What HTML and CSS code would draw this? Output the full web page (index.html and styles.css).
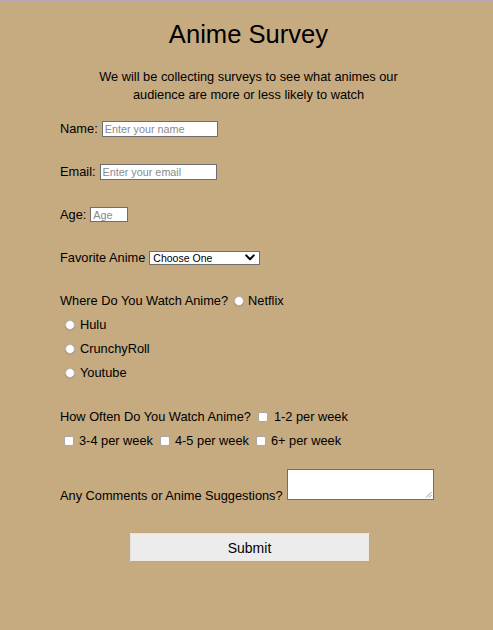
FILE: index.html
```html
<!DOCTYPE html>
<html lang="en">
<head>
<meta charset="utf-8">
<title>Anime Survey</title>
<link rel="stylesheet" href="styles.css">
</head>
<body>
<main class="page">
  <h1 class="title">Anime Survey</h1>
  <p class="intro">We will be collecting surveys to see what animes our<br>audience are more or less likely to watch</p>
  <form class="survey">
    <div class="row field"><label for="name">Name:</label><input class="text name" id="name" type="text" placeholder="Enter your name"></div>
    <div class="row field"><label for="email">Email:</label><input class="text email" id="email" type="text" placeholder="Enter your email"></div>
    <div class="row field"><label for="age">Age:</label><input class="text age" id="age" type="text" placeholder="Age"></div>
    <div class="row field"><label for="fav">Favorite Anime</label>
      <span class="select"><span>Choose One</span>
        <svg width="10" height="7" viewBox="0 0 10 7"><path d="M1.2 1.4 L5 5.2 L8.8 1.4" fill="none" stroke="#000" stroke-width="2" stroke-linecap="round" stroke-linejoin="round"/></svg>
      </span>
    </div>
    <div class="row tight"><span>Where Do You Watch Anime?</span><span class="radio first"></span><span>Netflix</span></div>
    <div class="row tight"><span class="radio"></span><span>Hulu</span></div>
    <div class="row tight"><span class="radio"></span><span>CrunchyRoll</span></div>
    <div class="row field wide"><span class="radio"></span><span>Youtube</span></div>
    <div class="row tight"><span>How Often Do You Watch Anime?</span><span class="check first"></span><span>1-2 per week</span></div>
    <div class="row"><span class="check"></span><span>3-4 per week</span><span class="check"></span><span>4-5 per week</span><span class="check"></span><span>6+ per week</span></div>
    <div class="comments"><span class="comments-label">Any Comments or Anime Suggestions?</span><span class="textarea"><svg class="grip" width="7" height="7" viewBox="0 0 7 7"><path d="M6.5 1 L1 6.5 M6.5 4 L4 6.5" stroke="#888" stroke-width="0.9"/></svg></span></div>
    <div class="submit-wrap"><span class="submit">Submit</span></div>
  </form>
</main>
</body>
</html>
```

FILE: styles.css
```css
html, body {
  margin: 0;
  padding: 0;
}
body {
  background: #c6aa80;
  border-top: 1px solid #b7a9b8;
  font-family: "Liberation Sans", Arial, Helvetica, sans-serif;
  color: #000;
  height: 629px;
  overflow: hidden;
}
.page {
  padding: 0 8px 0 12px;
}
.title {
  margin: 19px 0 0;
  text-align: center;
  font-size: 25.6px;
  font-weight: normal;
  line-height: 29.4px;
}
.intro {
  margin: 19px 0 0;
  text-align: center;
  font-size: 12.8px;
  line-height: 18px;
}
.survey {
  width: 377px;
  margin: 15px auto 0;
  font-size: 12.8px;
}
.row {
  display: flex;
  align-items: center;
  height: 19px;
  line-height: 19px;
  white-space: nowrap;
}
.row.field {
  margin-bottom: 24px;
}
.row.field.wide {
  margin-bottom: 25px;
}
.row.tight {
  margin-bottom: 5px;
}
.text {
  box-sizing: border-box;
  margin: 0 0 0 4px;
  height: 16px;
  padding: 0 2px;
  border: 1px solid #6e6e6e;
  background: #fff;
  font-family: "Liberation Sans", Arial, sans-serif;
  font-size: 10.8px;
  outline: none;
}
.text::placeholder {
  color: #8a8a8a;
}
.name { width: 116px; }
.email { width: 117px; }
.age { width: 38px; height: 15px; }
.select {
  box-sizing: border-box;
  margin-left: 4px;
  width: 111px;
  height: 14px;
  border: 1px solid #6e6e6e;
  background: #fff;
  display: flex;
  align-items: center;
  justify-content: space-between;
  padding: 0 4px 0 3px;
  font-size: 10.5px;
  line-height: 12px;
}
.radio {
  box-sizing: border-box;
  width: 10px;
  height: 10px;
  border-radius: 50%;
  background: #fff;
  border: 1px solid #b5b5b5;
  box-shadow: 0 0.5px 1px rgba(0,0,0,0.25);
  margin: 0 5px 0 5px;
  flex: none;
}
.radio.first {
  margin-left: 6px;
  margin-right: 4px;
}
.check {
  box-sizing: border-box;
  width: 10px;
  height: 10px;
  border-radius: 2px;
  background: #fff;
  border: 1px solid #a9a9a9;
  margin: 0 5px 0 4px;
  flex: none;
}
.row .check:first-child {
  margin-left: 4px;
}
.row span + .check {
  margin-left: 7px;
}
.row span + .check.first {
  margin-left: 7px;
  margin-right: 6px;
}
.comments {
  display: flex;
  align-items: flex-end;
  margin-top: 19px;
  white-space: nowrap;
}
.comments-label {
  line-height: 14px;
  margin-bottom: -3px;
}
.textarea {
  position: relative;
  box-sizing: border-box;
  margin-left: 4px;
  width: 147px;
  height: 31px;
  background: #fff;
  border: 1px solid #6e6e6e;
}
.grip {
  position: absolute;
  right: 1px;
  bottom: 1px;
}
.submit-wrap {
  margin-top: 33px;
  display: flex;
  justify-content: center;
  padding-left: 2px;
}
.submit {
  box-sizing: border-box;
  width: 240px;
  height: 29px;
  background: #ececec;
  border: 1px solid #a9a9a9;
  border-top-color: #e2e2e2;
  border-left-color: #e2e2e2;
  display: flex;
  align-items: center;
  justify-content: center;
  font-size: 14px;
}
```
